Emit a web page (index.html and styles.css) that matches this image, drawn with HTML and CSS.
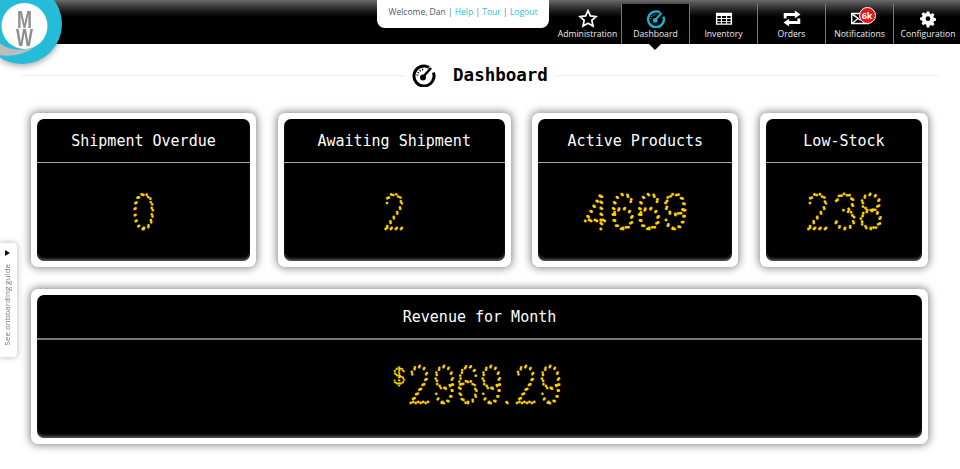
FILE: index.html
```html
<!DOCTYPE html>
<html lang="en">
<head>
<meta charset="utf-8">
<title>Dashboard</title>
<link rel="stylesheet" href="styles.css">
</head>
<body>
<header class="topbar">
  <div class="logo">
    <svg viewBox="0 0 64 66" width="64" height="66" aria-label="MW logo">
      <circle class="logo-ring" cx="22" cy="24" r="40"/>
      <path class="logo-swoosh" d="M-2 42 C8 50 20 52 34 47 C24 55 10 57 -2 55 Z"/>
      <circle class="logo-face" cx="24.500" cy="26" r="23"/>
      <g transform="translate(24.500 0) scale(1 1.300)">
        <text class="logo-text" x="0" y="5">MW</text>
      </g>
    </svg>
  </div>
  <div class="welcome">Welcome, Dan <span class="sep">|</span> <a href="#">Help</a> <span class="sep">|</span> <a href="#">Tour</a> <span class="sep">|</span> <a href="#">Logout</a></div>
  <nav class="nav">
    <a class="nav-item" href="#">
      <svg class="nav-icon" viewBox="0 0 20 20" width="20" height="20"><path class="ico-line" d="M10 1.800 12.500 7.300 18.500 8 14 12 15.300 18 10 15 4.700 18 6 12 1.500 8 7.500 7.300Z"/></svg>
      <span>Administration</span>
    </a>
    <a class="nav-item active" href="#">
      <svg class="nav-icon" viewBox="0 0 24 24" width="20" height="20"><path class="ico-cyan" d="M17 4.340A10 10 0 1 0 21.400 9.600"/><path class="ico-cyan-tick" d="M5.500 12.500A6.500 6.500 0 0 1 12 6.500"/><path class="ico-cyan-needle" d="M11 14 19 5"/><circle class="ico-cyan-hub" cx="11" cy="14.500" r="3"/></svg>
      <span>Dashboard</span>
    </a>
    <a class="nav-item" href="#">
      <svg class="nav-icon" viewBox="0 0 20 20" width="20" height="20"><path class="ico-fill" fill-rule="evenodd" d="M1.500 4h17v12.500h-17ZM3 7.300v2.300h3.700v-2.300ZM7.800 7.300v2.300h4.400v-2.300ZM13.300 7.300v2.300h3.700v-2.300ZM3 10.600v2h3.700v-2ZM7.800 10.600v2h4.400v-2ZM13.300 10.600v2h3.700v-2ZM3 13.500v1.700h3.700v-1.700ZM7.800 13.500v1.700h4.400v-1.700ZM13.300 13.500v1.700h3.700v-1.700Z"/></svg>
      <span>Inventory</span>
    </a>
    <a class="nav-item" href="#">
      <svg class="nav-icon" viewBox="0 0 20 20" width="20" height="20"><path class="ico-fill" d="M13 1.500 19 5.700 13 9.800V7.300H4.300V10H1.300V4.300H13Z"/><path class="ico-fill" d="M7 18.500 1 14.300 7 10.200V12.700H15.700V10H18.700V15.700H7Z"/></svg>
      <span>Orders</span>
    </a>
    <a class="nav-item" href="#">
      <span class="notify">
        <svg class="nav-icon" viewBox="0 0 20 20" width="20" height="20"><path class="ico-fill" fill-rule="evenodd" d="M.500 4h19v12H.500ZM3.500 5.500 10 10.500 16.500 5.500ZM2 6.500V14L7 10ZM3.500 14.500H16.500L12 10.800 10 12.300 8 10.800ZM18 6.500 13 10 18 14Z"/></svg>
        <b class="badge">6k</b>
      </span>
      <span>Notifications</span>
    </a>
    <a class="nav-item" href="#">
      <svg class="nav-icon" viewBox="0 0 20 20" width="20" height="20"><path class="ico-fill" fill-rule="evenodd" d="M8.500 2.500h3l.5 2.300 1.500.7 2-1.300 2.100 2.100-1.300 2 .7 1.500 2.300.5v3l-2.300.5-.7 1.500 1.300 2-2.100 2.100-2-1.300-1.500.7-.5 2.300h-3L8 17.800l-1.500-.7-2 1.300-2.100-2.100 1.300-2-.7-1.500L.7 12.300v-3l2.300-.5.700-1.500-1.300-2 2.100-2.100 2 1.300L8 4.800ZM10 8a2.800 2.800 0 1 0 0 5.600A2.800 2.800 0 0 0 10 8Z" transform="translate(1 .5) scale(.9)"/></svg>
      <span>Configuration</span>
    </a>
  </nav>
</header>

<aside class="guide">
  <span class="guide-arrow"></span>
  <span class="guide-text">See onboarding guide</span>
</aside>

<main class="page">
  <div class="page-title">
    <h1>
      <svg viewBox="0 0 24 24" width="24" height="24"><path class="title-ring" d="M17 4.340A10 10 0 1 0 21.400 9.600"/><path class="title-tick" d="M5.500 12.500A6.500 6.500 0 0 1 12 6.500"/><path class="title-needle" d="M11 14 19 5"/><circle cx="11" cy="14.500" r="3"/></svg>
      <span>Dashboard</span>
    </h1>
  </div>

  <section class="row">
    <article class="card">
      <div class="card-in">
        <h2>Shipment Overdue</h2>
        <svg class="led" viewBox="0 0 213 98" height="98"><text transform="translate(106.500 66) scale(.85 1)">0</text></svg>
      </div>
    </article>
    <article class="card">
      <div class="card-in">
        <h2>Awaiting Shipment</h2>
        <svg class="led" viewBox="0 0 221 98" height="98"><text transform="translate(110.500 66) scale(.85 1)">2</text></svg>
      </div>
    </article>
    <article class="card">
      <div class="card-in">
        <h2>Active Products</h2>
        <svg class="led" viewBox="0 0 194 98" height="98"><text transform="translate(97 66) scale(.97 1)">4669</text></svg>
      </div>
    </article>
    <article class="card">
      <div class="card-in">
        <h2>Low-Stock</h2>
        <svg class="led" viewBox="0 0 156 98" height="98"><text transform="translate(78 66) scale(.92 1)">238</text></svg>
      </div>
    </article>
  </section>

  <article class="card revenue">
    <div class="card-in">
      <h2>Revenue for Month</h2>
      <svg class="led led-big" viewBox="0 0 885 98" height="98"><text class="cur" x="362" y="45">$</text><text class="big" transform="translate(447.500 64) scale(.83 1)">2969.29</text></svg>
    </div>
  </article>
</main>
</body>
</html>
```
FILE: styles.css
```css
* { box-sizing: border-box; }
html, body { margin: 0; height: 100%; }
body { background: #fff; font-family: "Open Sans", sans-serif; overflow: hidden; position: relative; }
a { text-decoration: none; color: inherit; }

.topbar { height: 44px; background: linear-gradient(#6a6a6a 0, #1c1c1c 11px, #000 17px); display: flex; justify-content: flex-end; position: relative; }
.logo { position: absolute; left: 0; top: 0; width: 64px; height: 66px; z-index: 3; filter: drop-shadow(0 2px 3px rgba(0,0,0,.35)); }
.logo svg { display: block; overflow: hidden; }
.logo-ring { fill: #25bcd9; }
.logo-swoosh { fill: #bdbdbd; }
.logo-face { fill: #fff; }
.logo-text { fill: #8e8e8e; font: 700 18px "Liberation Sans", sans-serif; writing-mode: vertical-rl; text-orientation: upright; letter-spacing: -6px; }

.welcome { position: absolute; left: 377px; top: 0; width: 172px; height: 28px; background: #fff; border-radius: 0 0 8px 8px; font-size: 8.500px; line-height: 23px; text-align: center; color: #555; }
.welcome a { color: #22c4dc; }
.welcome .sep { color: #777; }

.nav { display: flex; height: 44px; margin-right: -2px; }
.nav-item { width: 68px; height: 40px; margin-top: 4px; padding-top: 5px; border-right: 1px solid #777; display: flex; flex-direction: column; align-items: center; color: #eee; font-size: 8.600px; line-height: 12px; position: relative; }
.nav-item:last-child { border-right: 0; }
.nav-item > span:last-child { white-space: nowrap; }
.nav-icon { display: block; height: 19px; }
.ico-line { fill: none; stroke: #fff; stroke-width: 1.800; }
.ico-fill { fill: #fff; }
.ico-cyan { fill: none; stroke: #14b5d0; stroke-width: 3; }
.ico-cyan-tick { fill: none; stroke: #14b5d0; stroke-width: 2; stroke-dasharray: 1 1.500; }
.ico-cyan-needle { fill: none; stroke: #14b5d0; stroke-width: 2.500; }
.ico-cyan-hub { fill: #14b5d0; }
.nav-item.active { background: #000; box-shadow: -1px 0 0 #777; }
.nav-item.active::after { content: ""; position: absolute; left: 27px; top: 40px; border: 6px solid transparent; border-top-color: #000; border-bottom: 0; z-index: 2; }
.notify { display: block; position: relative; height: 19px; }
.badge { position: absolute; left: 9px; top: -2px; width: 17px; height: 17px; border-radius: 50%; background: #e8141c; border: 1px solid #fff; color: #fff; font-size: 9px; line-height: 15px; text-align: center; font-weight: 700; }

.guide { position: absolute; left: 0; top: 243px; width: 17px; height: 114px; background: #fff; border-radius: 0 4px 4px 0; box-shadow: 0 0 6px rgba(0,0,0,.3); display: flex; flex-direction: column; align-items: center; }
.guide-arrow { margin-top: 7px; border-left: 5px solid #111; border-top: 3.500px solid transparent; border-bottom: 3.500px solid transparent; margin-bottom: 8px; margin-right: 3px; }
.guide-text { writing-mode: vertical-rl; transform: rotate(180deg); font-size: 8px; line-height: 12px; color: #777; white-space: nowrap; margin-right: 3px; }

.page { padding: 0 32px 0 31px; }
.page-title { height: 60px; margin: 0 -12px 0 -11px; display: flex; align-items: center; justify-content: center; background: linear-gradient(#f0f0f0,#f0f0f0) center 31px / 100% 1px no-repeat; }
.page-title h1 { margin: 2px 0 0; padding: 0 7px; background: #fff; display: flex; align-items: center; gap: 17px; font: 700 17.500px "DejaVu Sans Mono", monospace; color: #000; height: 32px; }
.title-ring { fill: none; stroke: #000; stroke-width: 3; }
.title-tick { fill: none; stroke: #000; stroke-width: 2; stroke-dasharray: 1 1.500; }
.title-needle { fill: none; stroke: #000; stroke-width: 2.500; }

.row { display: grid; grid-template-columns: 225px 233px 206px 168px; justify-content: space-between; margin-top: 9px; }
.card { height: 154px; padding: 6px; background: #fff; border-radius: 7px; box-shadow: 0 0 9px 1px rgba(0,0,0,.5); }
.card-in { height: 100%; background: #000; border-radius: 7px; box-shadow: inset 0 -3px 3px -1px rgba(255,255,255,.35); overflow: hidden; }
.card h2 { margin: 0; height: 44px; border-bottom: 1px solid #aaa; color: #fff; font: 400 15px/44px "DejaVu Sans Mono", monospace; text-align: center; white-space: nowrap; }
.led { display: block; width: 100%; }
.led text { font: 100 48px "Inter", sans-serif; letter-spacing: 0; fill: none; stroke: #ffd000; stroke-width: 2.800; stroke-linecap: round; stroke-dasharray: 0 6; text-anchor: middle; }
.led .big { font-size: 50px; }
.led .cur { font-size: 22px; stroke-width: 1.800; stroke-dasharray: 0 3; }
.revenue { margin-top: 22px; height: 155px; }
.revenue h2 { height: 45px; border-bottom: 2px solid #777; }
.revenue .led { margin-top: -1px; }
```
